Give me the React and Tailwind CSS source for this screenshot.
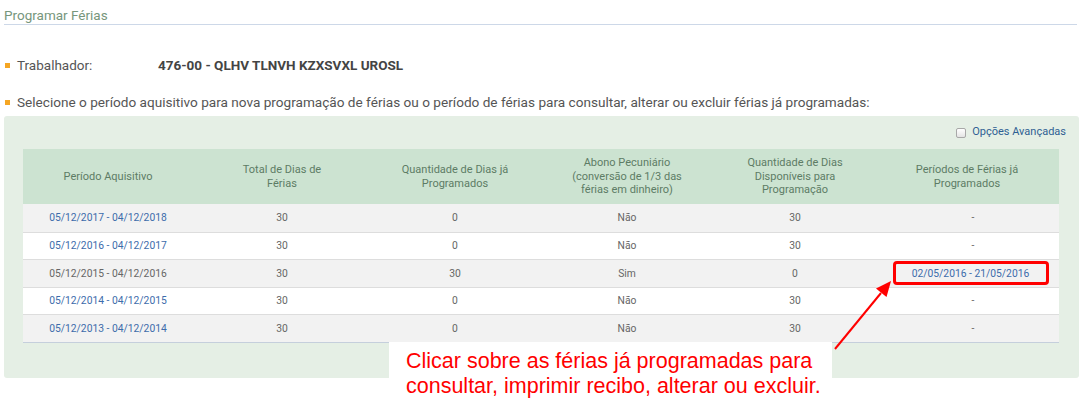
import React from "react";

const cols = "grid grid-cols-[170px_178px_168px_176px_160px_184px]";

const rows = [
    { periodo: "05/12/2017 - 04/12/2018", total: "30", prog: "0", abono: "Não", disp: "30", ferias: "-", link: true },
    { periodo: "05/12/2016 - 04/12/2017", total: "30", prog: "0", abono: "Não", disp: "30", ferias: "-", link: true },
    { periodo: "05/12/2015 - 04/12/2016", total: "30", prog: "30", abono: "Sim", disp: "0", ferias: "02/05/2016 - 21/05/2016", link: false },
    { periodo: "05/12/2014 - 04/12/2015", total: "30", prog: "0", abono: "Não", disp: "30", ferias: "-", link: true },
    { periodo: "05/12/2013 - 04/12/2014", total: "30", prog: "0", abono: "Não", disp: "30", ferias: "-", link: true },
];

const headers = [
    ["Período Aquisitivo"],
    ["Total de Dias de", "Férias"],
    ["Quantidade de Dias já", "Programados"],
    ["Abono Pecuniário", "(conversão de 1/3 das", "férias em dinheiro)"],
    ["Quantidade de Dias", "Disponíveis para", "Programação"],
    ["Períodos de Férias já", "Programados"],
];

const Bullet = () => <span className="inline-block w-[5px] h-[5px] bg-[#f5a623] mr-[7px] ml-[5px]" />;

const App = () => {
    return (
        <div className="relative w-[1081px] h-[406px] bg-white overflow-hidden font-['Roboto',sans-serif]">
            {/* Titulo */}
            <div className="mx-[4px] pt-[3px] h-[25px] border-b border-[#cdd8e8]">
                <span className="text-[13.5px] leading-[18px] text-[#77967c]">Programar Férias</span>
            </div>

            {/* Trabalhador */}
            <div className="flex items-center mt-[31px] h-[18px] text-[13.5px] text-[#555]">
                <Bullet />
                <span className="w-[141px]">Trabalhador:</span>
                <span className="font-bold text-[#444]">476-00 - QLHV TLNVH KZXSVXL UROSL</span>
            </div>

            <div className="flex items-center mt-[19px] h-[18px] text-[13.6px] text-[#555]">
                <Bullet />
                <span>Selecione o período aquisitivo para nova programação de férias ou o período de férias para consultar, alterar ou excluir férias já programadas:</span>
            </div>

            {/* Painel */}
            <div className="ml-[4px] mt-[5px] w-[1075px] h-[262px] bg-[#e5efe5] rounded-[3px] pl-[19px]">
                <div className="h-[33px] flex items-center justify-end pr-[13px] gap-[6px]">
                    <span className="w-[10px] h-[10px] rounded-[2px] border border-[#a8a8a8] bg-gradient-to-b from-white to-[#e4e4e4]" />
                    <span className="text-[11px] text-[#2f5f93]">Opções Avançadas</span>
                </div>

                <div className="w-[1036px] text-[11px]">
                    <div className={`${cols} h-[55px] bg-[#cce3d1] text-[#5d7c65]`}>
                        {headers.map((h, i) => (
                            <div key={i} className="flex flex-col items-center justify-center text-center leading-[13.5px]">
                                {h.map((l, j) => <span key={j}>{l}</span>)}
                            </div>
                        ))}
                    </div>
                    <div className="border-b border-[#c5cfdc] text-[10.3px]">
                        {rows.map((r, i) => (
                            <div key={i} className={`${cols} h-[27.5px] items-center text-center text-[#666] ${i % 2 === 0 ? "bg-[#f2f2f2]" : "bg-white"} ${i > 0 ? "border-t border-[#dddddd]" : ""}`}>
                                <span className={r.link ? "text-[#3d6cab]" : "text-[#666]"}>{r.periodo}</span>
                                <span className="text-[#666]">{r.total}</span>
                                <span className="text-[#666]">{r.prog}</span>
                                <span className="text-[#666]">{r.abono}</span>
                                <span className="text-[#666]">{r.disp}</span>
                                {r.ferias === "-" ? (
                                    <span className="text-[#666] pl-[12px]">-</span>
                                ) : (
                                    <span className="justify-self-center ml-[7px] w-[156px] h-[24px] border-[3px] border-[#ff0000] rounded-[4px] flex items-center justify-center text-[#3d6cab]">
                                        {r.ferias}
                                    </span>
                                )}
                            </div>
                        ))}
                    </div>
                </div>
            </div>

            {/* Anotação */}
            <div className="absolute left-[389px] top-[342px] w-[443px] h-[64px] bg-white pl-[17px] pt-[7px] font-['Liberation_Sans',Arial,sans-serif] text-[21.5px] leading-[25px] text-[#ff0000]">
                <div>Clicar sobre as férias já programadas para</div>
                <div>consultar, imprimir recibo, alterar ou excluir.</div>
            </div>
            <svg className="absolute left-0 top-0 pointer-events-none" width="1081" height="406">
                <line x1="835" y1="349" x2="881" y2="293" stroke="#ff0000" strokeWidth="2" />
                <polygon points="891,281 886.5,297 876,288.5" fill="#ff0000" />
            </svg>
        </div>
    );
};

export default App;
